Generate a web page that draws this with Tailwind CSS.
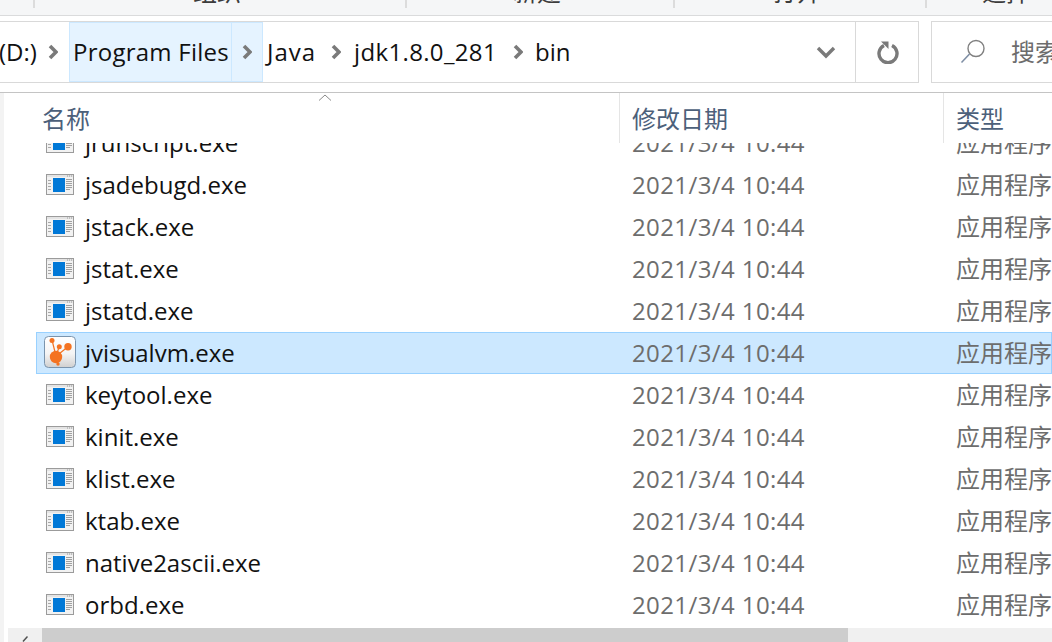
<!DOCTYPE html>
<html lang="zh-CN">
<head>
<meta charset="UTF-8">
<script src="https://cdn.jsdelivr.net/npm/@tailwindcss/browser@4"></script>
<title>bin</title>
</head>
<body class="bg-white overflow-hidden font-['Open_Sans','Noto_Sans_CJK_SC',sans-serif] text-[24px]">
<svg class="hidden">
  <symbol id="exe" viewBox="0 0 28 21">
    <rect x="0.5" y="0.5" width="27" height="20" fill="#f2f2f2" stroke="#9b9b9b"/>
    <rect x="1" y="1" width="26" height="2" fill="#e4e4e4"/>
    <path d="M21 2h1M23 2h1M25 2h1" stroke="#9a9a9a"/>
    <rect x="7" y="4" width="12" height="14" fill="#0078d7"/>
    <path d="M2 6.5h3M2 9.5h3M2 12.5h3M2 15.5h3" stroke="#a8a8a8"/>
    <path d="M20 5.5h6M20 7.5h6M20 9.5h6M20 11.5h6M20 13.5h6M20 15.5h4" stroke="#a0a0a0"/>
  </symbol>
  <symbol id="chev" viewBox="0 0 10 16">
    <path d="M2 2l6 6-6 6" fill="none" stroke="#7a7a7a" stroke-width="3.6"/>
  </symbol>
</svg>

<div class="flex flex-col h-[642px] w-[1052px] overflow-hidden">
  <!-- toolbar, cut off by the window -->
  <div class="flex h-[16px] flex-none overflow-hidden border-b border-[#dadbdc] bg-[#f5f6f7] text-[#3c3c3c]">
    <div class="w-[33px] flex-none"></div>
    <div class="flex h-[8px] w-[372px] flex-none border-l-2 border-[#dcdcdc] pl-[158px]"><span class="-mt-[24px] leading-[32px]">组织</span></div>
    <div class="flex h-[8px] w-[268px] flex-none border-l-2 border-[#dcdcdc] pl-[106px]"><span class="-mt-[24px] leading-[32px]">新建</span></div>
    <div class="flex h-[8px] w-[252px] flex-none border-l-2 border-[#dcdcdc] pl-[98px]"><span class="-mt-[24px] leading-[32px]">打开</span></div>
    <div class="flex h-[8px] flex-1 border-l-2 border-[#dcdcdc] pl-[55px]"><span class="-mt-[24px] leading-[32px]">选择</span></div>
  </div>

  <!-- address + search -->
  <div class="mt-[5px] flex h-[62px] flex-none text-[#111]">
    <div class="flex w-[919px] flex-none items-center border-y border-r border-[#d9d9d9]">
      <div class="flex h-full w-[69px] flex-none items-center"><span class="-ml-[1px] whitespace-nowrap">(D:)</span><svg class="ml-[11px] h-[16px] w-[10px] flex-none"><use href="#chev"/></svg></div>
      <div class="flex h-full w-[163px] flex-none items-center border border-[#cce8ff] bg-[#e5f3ff] pl-[3px] tracking-[0.25px]">Program Files</div>
      <div class="flex h-full w-[31px] flex-none items-center justify-center border-y border-r border-[#cce8ff] bg-[#e5f3ff]"><svg class="h-[16px] w-[10px]"><use href="#chev"/></svg></div>
      <div class="flex h-full w-[91px] flex-none items-center pl-[4px]"><span class="tracking-[1px]">Java</span><svg class="ml-[15px] h-[16px] w-[10px] flex-none"><use href="#chev"/></svg></div>
      <div class="flex h-full w-[181px] flex-none items-center"><span class="tracking-[0.35px]">jdk1.8.0_281</span><svg class="ml-[16px] h-[16px] w-[10px] flex-none"><use href="#chev"/></svg></div>
      <div class="flex h-full flex-1 items-center">bin</div>
      <div class="flex h-full w-[62px] flex-none items-center justify-center border-r border-[#d9d9d9] pl-[3px]">
        <svg class="h-[14px] w-[20px]" viewBox="0 0 20 14"><path d="M2 3l8 8 8-8" fill="none" stroke="#7a7a7a" stroke-width="3.4"/></svg>
      </div>
      <div class="flex h-full w-[62px] flex-none items-center justify-center pl-[1px]">
        <svg class="h-[24px] w-[24px]" viewBox="0 0 24 24"><path d="M8 5.6a9 9 0 1 0 8 0" fill="none" stroke="#7a7a7a" stroke-width="3.4"/><path d="M5 1.5h7.5v7.5z" fill="#7a7a7a"/></svg>
      </div>
    </div>
    <div class="ml-[12px] flex flex-1 items-center border-y border-l border-[#d9d9d9] pl-[28px] text-[#6d6d6d]">
      <svg class="h-[26px] w-[26px] flex-none" viewBox="0 0 26 26"><circle cx="16" cy="9.5" r="8" fill="none" stroke="#808080" stroke-width="1.4"/><path d="M1.5 23.5l8-8.5" stroke="#7f8fa5" stroke-width="1.6"/></svg>
      <span class="ml-[25px] whitespace-nowrap">搜索</span>
    </div>
  </div>

  <div class="mt-[9px] h-px flex-none bg-[#c4c4c4]"></div>

  <!-- file list -->
  <div class="flex min-h-0 flex-1 border-l-[4px] border-[#f3f3f3]">
    <div class="flex min-w-0 flex-1 flex-col">
      <div class="relative flex h-[50px] flex-none items-center text-[#4c607a]">
        <svg class="absolute left-[314px] top-[1px] h-[7px] w-[14px]" viewBox="0 0 14 7"><path d="M1 6.5l6-5.5 6 5.5" fill="none" stroke="#8a8a8a"/></svg>
        <div class="flex h-full w-[616px] flex-none items-center border-r border-[#e5e5e5] pl-[38px] pt-[2px]">名称</div>
        <div class="flex h-full w-[324px] flex-none items-center border-r border-[#e5e5e5] pl-[12px] pt-[2px]">修改日期</div>
        <div class="flex h-full flex-1 items-center pl-[12px] pt-[2px]">类型</div>
      </div>
      <div class="min-h-0 flex-1 overflow-hidden">
        <div class="-mt-[21px] ml-[32px] text-[#6d6d6d]">
          <div class="flex h-[42px] items-center border border-transparent pl-[9px]"><svg class="h-[21px] w-[28px] flex-none -translate-y-[1px]"><use href="#exe"/></svg><span class="ml-[11px] w-[547px] flex-none text-[#111]">jrunscript.exe</span><span class="w-[324px] flex-none tracking-[0.4px]">2021/3/4 10:44</span><span class="whitespace-nowrap">应用程序</span></div>
          <div class="flex h-[42px] items-center border border-transparent pl-[9px]"><svg class="h-[21px] w-[28px] flex-none -translate-y-[1px]"><use href="#exe"/></svg><span class="ml-[11px] w-[547px] flex-none text-[#111]">jsadebugd.exe</span><span class="w-[324px] flex-none tracking-[0.4px]">2021/3/4 10:44</span><span class="whitespace-nowrap">应用程序</span></div>
          <div class="flex h-[42px] items-center border border-transparent pl-[9px]"><svg class="h-[21px] w-[28px] flex-none -translate-y-[1px]"><use href="#exe"/></svg><span class="ml-[11px] w-[547px] flex-none text-[#111]">jstack.exe</span><span class="w-[324px] flex-none tracking-[0.4px]">2021/3/4 10:44</span><span class="whitespace-nowrap">应用程序</span></div>
          <div class="flex h-[42px] items-center border border-transparent pl-[9px]"><svg class="h-[21px] w-[28px] flex-none -translate-y-[1px]"><use href="#exe"/></svg><span class="ml-[11px] w-[547px] flex-none text-[#111]">jstat.exe</span><span class="w-[324px] flex-none tracking-[0.4px]">2021/3/4 10:44</span><span class="whitespace-nowrap">应用程序</span></div>
          <div class="flex h-[42px] items-center border border-transparent pl-[9px]"><svg class="h-[21px] w-[28px] flex-none -translate-y-[1px]"><use href="#exe"/></svg><span class="ml-[11px] w-[547px] flex-none text-[#111]">jstatd.exe</span><span class="w-[324px] flex-none tracking-[0.4px]">2021/3/4 10:44</span><span class="whitespace-nowrap">应用程序</span></div>
          <div class="flex h-[42px] items-center border border-[#99d1ff] bg-[#cce8ff] pl-[7px]">
            <svg class="h-[32px] w-[32px] flex-none -translate-y-[1px]" viewBox="0 0 32 32">
              <defs><linearGradient id="vm" x1="0" y1="0" x2="0" y2="1"><stop offset="0" stop-color="#ffffff"/><stop offset="0.55" stop-color="#f4f4f4"/><stop offset="1" stop-color="#d0d0d0"/></linearGradient></defs>
              <rect x="0.5" y="0.5" width="31" height="31" rx="4" fill="url(#vm)" stroke="#7a94ad"/>
              <path d="M8 4l4 16M15.3 10.7l-3 8M24 10.7l-12 9.5M12 21l2 7" stroke="#f47321" stroke-width="1.2"/>
              <circle cx="12" cy="21" r="6.2" fill="#f47321"/>
              <circle cx="8" cy="4.4" r="2.5" fill="#f47321"/>
              <circle cx="15.3" cy="10.7" r="2.5" fill="#f47321"/>
              <circle cx="24" cy="10.7" r="3.7" fill="#f47321"/>
              <circle cx="14" cy="28" r="1.7" fill="#f47321"/>
            </svg>
            <span class="ml-[9px] w-[547px] flex-none text-[#111]">jvisualvm.exe</span><span class="w-[324px] flex-none tracking-[0.4px]">2021/3/4 10:44</span><span class="whitespace-nowrap">应用程序</span>
          </div>
          <div class="flex h-[42px] items-center border border-transparent pl-[9px]"><svg class="h-[21px] w-[28px] flex-none -translate-y-[1px]"><use href="#exe"/></svg><span class="ml-[11px] w-[547px] flex-none text-[#111]">keytool.exe</span><span class="w-[324px] flex-none tracking-[0.4px]">2021/3/4 10:44</span><span class="whitespace-nowrap">应用程序</span></div>
          <div class="flex h-[42px] items-center border border-transparent pl-[9px]"><svg class="h-[21px] w-[28px] flex-none -translate-y-[1px]"><use href="#exe"/></svg><span class="ml-[11px] w-[547px] flex-none text-[#111]">kinit.exe</span><span class="w-[324px] flex-none tracking-[0.4px]">2021/3/4 10:44</span><span class="whitespace-nowrap">应用程序</span></div>
          <div class="flex h-[42px] items-center border border-transparent pl-[9px]"><svg class="h-[21px] w-[28px] flex-none -translate-y-[1px]"><use href="#exe"/></svg><span class="ml-[11px] w-[547px] flex-none text-[#111]">klist.exe</span><span class="w-[324px] flex-none tracking-[0.4px]">2021/3/4 10:44</span><span class="whitespace-nowrap">应用程序</span></div>
          <div class="flex h-[42px] items-center border border-transparent pl-[9px]"><svg class="h-[21px] w-[28px] flex-none -translate-y-[1px]"><use href="#exe"/></svg><span class="ml-[11px] w-[547px] flex-none text-[#111]">ktab.exe</span><span class="w-[324px] flex-none tracking-[0.4px]">2021/3/4 10:44</span><span class="whitespace-nowrap">应用程序</span></div>
          <div class="flex h-[42px] items-center border border-transparent pl-[9px]"><svg class="h-[21px] w-[28px] flex-none -translate-y-[1px]"><use href="#exe"/></svg><span class="ml-[11px] w-[547px] flex-none text-[#111]">native2ascii.exe</span><span class="w-[324px] flex-none tracking-[0.4px]">2021/3/4 10:44</span><span class="whitespace-nowrap">应用程序</span></div>
          <div class="flex h-[42px] items-center border border-transparent pl-[9px]"><svg class="h-[21px] w-[28px] flex-none -translate-y-[1px]"><use href="#exe"/></svg><span class="ml-[11px] w-[547px] flex-none text-[#111]">orbd.exe</span><span class="w-[324px] flex-none tracking-[0.4px]">2021/3/4 10:44</span><span class="whitespace-nowrap">应用程序</span></div>
        </div>
      </div>
      <!-- horizontal scrollbar -->
      <div class="ml-[4px] flex h-[14px] flex-none bg-[#f0f0f0]">
        <div class="flex w-[34px] flex-none items-start justify-center pt-[8px]"><svg class="h-[6px] w-[6px]" viewBox="0 0 6 6"><path d="M5.5 0.5L1 5.5" stroke="#505050" stroke-width="1.5"/></svg></div>
        <div class="w-[806px] flex-none bg-[#cdcdcd]"></div>
      </div>
    </div>
  </div>
</div>
</body>
</html>
